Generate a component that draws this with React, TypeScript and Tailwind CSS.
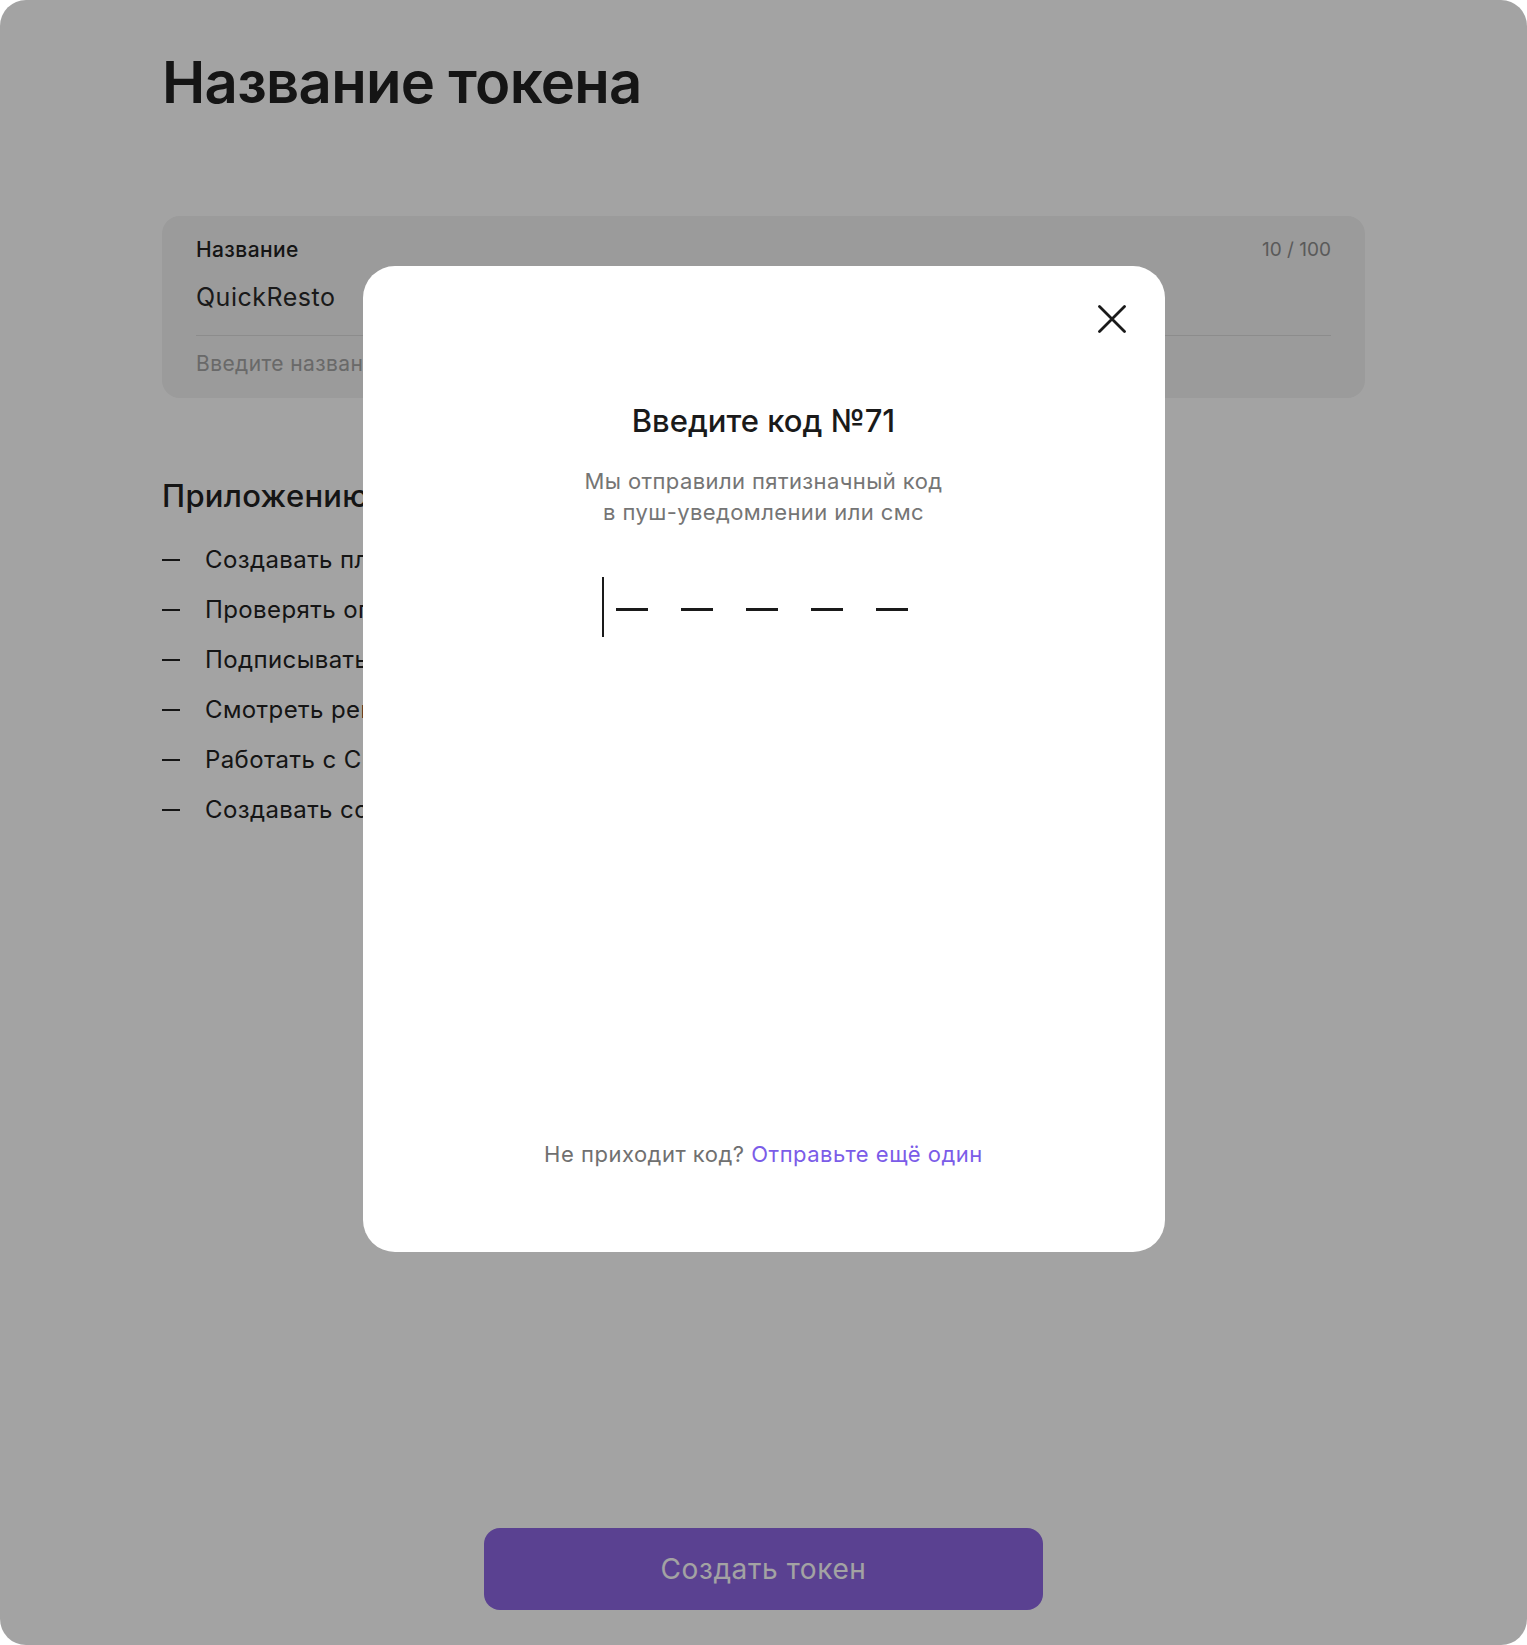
import React from "react";

const items = [
  "Создавать платежи",
  "Проверять операции",
  "Подписывать документы",
  "Смотреть реквизиты",
  "Работать с СБП",
  "Создавать сотрудников",
];

export default function App() {
  return (
    <div className="bg-white w-[1527px] h-[1645px]" style={{ fontFamily: "Inter, 'Noto Sans', sans-serif" }}>
      <div className="relative w-full h-full rounded-[26px] overflow-hidden bg-white">
        <div className="flex flex-col h-full w-[1203px] mx-auto pt-[46px] pb-[35px]">
          <h1 className="text-[58px] leading-[72px] font-semibold text-[#222] tracking-[-0.7px]">Название токена</h1>

          <div className="mt-[98px] rounded-[18px] bg-[#f2f2f2] px-[34px] pt-[20px] pb-[20px]">
            <div className="flex justify-between items-center">
              <span className="text-[21px] leading-[28px] font-medium text-[#222] tracking-[0.4px]">Название</span>
              <span className="text-[19px] leading-[28px] text-[#8e8e8e]">10 / 100</span>
            </div>
            <div className="mt-[17px] text-[25px] leading-[32px] text-[#2a2a2a] tracking-[0.5px]">QuickResto</div>
            <div className="mt-[22px] h-px bg-[#dcdcdc]" />
            <div className="mt-[14px] text-[21px] leading-[28px] text-[#a4a4a4] tracking-[0.4px]">Введите название токена</div>
          </div>

          <h2 className="mt-[78px] text-[31px] leading-[40px] font-medium text-[#222] tracking-[0.3px]">Приложению будет доступно</h2>
          <ul className="mt-[28px] flex flex-col gap-[18px]">
            {items.map((t) => (
              <li key={t} className="flex items-center text-[24px] leading-[32px] text-[#222] tracking-[0.4px]">
                <span className="w-[18px] h-[2px] bg-[#222] mr-[25px]" />
                {t}
              </li>
            ))}
          </ul>

          <button className="mt-auto mx-auto w-[559px] h-[82px] rounded-[16px] bg-[#8d66e3] text-white text-[28px] tracking-[0.6px]">
            Создать токен
          </button>
        </div>

        <div className="absolute inset-0 bg-black/[0.36]" />

        <div className="absolute top-[266px] left-1/2 -translate-x-1/2 w-[802px] h-[986px] bg-white rounded-[32px] flex flex-col items-center pt-[135px] pb-[83px]">
          <button className="absolute top-[39px] right-[39px] w-[28px] h-[28px] text-[#1a1a1a]">
            <svg viewBox="0 0 28 28" width="28" height="28" fill="none" stroke="currentColor" strokeWidth="2.8" strokeLinecap="round">
              <path d="M1.5 1.5 L26.5 26.5 M26.5 1.5 L1.5 26.5" />
            </svg>
          </button>
          <h3 className="text-[31px] leading-[40px] font-medium text-[#1a1a1a]">Введите код №71</h3>
          <p className="mt-[25px] text-[22px] leading-[31px] text-[#757575] text-center tracking-[0.4px]">
            Мы отправили пятизначный код
            <br />в пуш-уведомлении или смс
          </p>
          <div className="relative mt-[49px] h-[60px] flex items-center gap-[33px] -translate-x-[2px]">
            <span className="absolute left-[-14px] top-0 w-[2px] h-[60px] bg-[#1a1a1a]" />
            {[0, 1, 2, 3, 4].map((i) => (
              <span key={i} className="w-[32px] h-[3px] mt-[5px] bg-[#1a1a1a]" />
            ))}
          </div>
          <div className="mt-auto text-[22px] leading-[30px] text-[#707070] tracking-[0.5px]">
            Не приходит код? <span className="text-[#7b5ce8]">Отправьте ещё один</span>
          </div>
        </div>
      </div>
    </div>
  );
}
